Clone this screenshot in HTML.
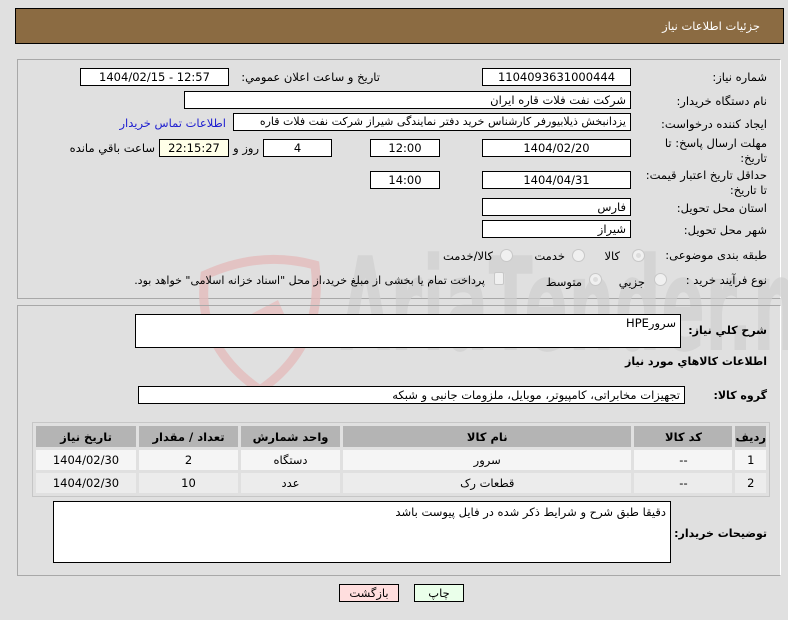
<!DOCTYPE html>
<html><head><meta charset="utf-8">
<style>
*{box-sizing:border-box;margin:0;padding:0}
body{width:788px;height:620px;background:#e0e0e0;font-family:"DejaVu Sans","Liberation Sans",sans-serif;font-size:11px;color:#000;position:relative;overflow:hidden}
.a{position:absolute}
.box{position:absolute;background:#fff;border:1px solid #000;height:18px;line-height:16px;padding:0 4px;font-size:11.5px;white-space:nowrap;overflow:hidden}
.c{text-align:center}
.r{text-align:right;direction:rtl}
.lbl{position:absolute;direction:rtl;text-align:right;white-space:nowrap;font-size:11.5px}
.rad{position:absolute;width:13px;height:13px;border-radius:50%;border:1px solid #c8c8c8;background:#f0f0f0}
table{border-collapse:separate;border-spacing:3px;position:absolute;left:32px;top:422px;width:738px;direction:rtl;background:#e0e0e0;border:1px solid #c6c6c6}
td,th{text-align:center;height:20px;font-size:11.5px}
th{background:#b4b4b4;font-weight:bold;height:21px}
tr.r1 td{background:#f5f5f5}
tr.r2 td{background:#ececec}
.btn{position:absolute;height:18px;border:1px solid #000;text-align:center;line-height:16px;font-size:11.5px}
</style></head><body>
<div class="a" style="left:15px;top:8px;width:769px;height:36px;background:#8b6b42;border:1px solid #000"></div>
<div class="lbl" style="right:28px;top:19px;color:#fff">جزئيات اطلاعات نياز</div>

<div class="a" style="left:17px;top:59px;width:764px;height:240px;border:1px solid #a8a8a8;border-right-color:#fff"></div>

<!-- watermark -->
<svg class="a" style="left:190px;top:245px" width="598" height="150" viewBox="0 0 598 150">
<path d="M15 30 Q70 5 125 20 Q135 100 70 145 Q5 100 15 30Z" fill="none" stroke="#e3bcbc" stroke-width="9" opacity="0.8"/>
<path d="M50 75 L88 55 L98 78 L70 92Z" fill="#e6c6c6"/>
<text x="0" y="0" font-family="DejaVu Sans" font-weight="bold" font-size="130" fill="#cfcfcf" opacity="0.7" transform="translate(150,105) scale(0.5,1)">AriaTender.net</text>
</svg>

<div class="lbl" style="right:21px;top:70px">شماره نياز:</div>
<div class="box c" style="left:482px;top:68px;width:149px">1104093631000444</div>
<div class="lbl" style="right:408px;top:70px">تاريخ و ساعت اعلان عمومي:</div>
<div class="box c" style="left:80px;top:68px;width:149px">1404/02/15 - 12:57</div>

<div class="lbl" style="right:21px;top:94px">نام دستگاه خريدار:</div>
<div class="box r" style="left:184px;top:91px;width:447px">شرکت نفت فلات قاره ايران</div>

<div class="lbl" style="right:21px;top:117px">ايجاد کننده درخواست:</div>
<div class="box r" style="left:233px;top:113px;width:398px;font-size:11px">يزدانبخش ذيلابيورفر کارشناس خريد دفتر نمايندگی شيراز شرکت نفت فلات قاره</div>
<div class="lbl" style="right:562px;top:116px;color:#2020d0">اطلاعات تماس خريدار</div>

<div class="lbl" style="right:21px;top:136px;line-height:15px">مهلت ارسال پاسخ: تا<br>تاريخ:</div>
<div class="box c" style="left:482px;top:139px;width:149px">1404/02/20</div>
<div class="lbl" style="right:352px;top:141px">ساعت</div>
<div class="box c" style="left:370px;top:139px;width:70px">12:00</div>
<div class="box c" style="left:263px;top:139px;width:69px">4</div>
<div class="lbl" style="right:529px;top:141px">روز و</div>
<div class="box c" style="left:159px;top:139px;width:70px;background:#ffffe8">22:15:27</div>
<div class="lbl" style="right:633px;top:141px">ساعت باقي مانده</div>

<div class="lbl" style="right:21px;top:168px;line-height:15px">حداقل تاريخ اعتبار قيمت:<br>تا تاريخ:</div>
<div class="box c" style="left:482px;top:171px;width:149px">1404/04/31</div>
<div class="lbl" style="right:352px;top:173px">ساعت</div>
<div class="box c" style="left:370px;top:171px;width:70px">14:00</div>

<div class="lbl" style="right:21px;top:201px">استان محل تحويل:</div>
<div class="box r" style="left:482px;top:198px;width:149px">فارس</div>
<div class="lbl" style="right:21px;top:223px">شهر محل تحويل:</div>
<div class="box r" style="left:482px;top:220px;width:149px">شيراز</div>

<div class="lbl" style="right:21px;top:248px">طبقه بندی موضوعی:</div>
<div class="rad" style="left:632px;top:249px;background:#ddd;box-shadow:inset 0 0 0 3px #f0f0f0"></div>
<div class="lbl" style="right:168px;top:249px">کالا</div>
<div class="rad" style="left:572px;top:249px"></div>
<div class="lbl" style="right:223px;top:249px">خدمت</div>
<div class="rad" style="left:500px;top:249px"></div>
<div class="lbl" style="right:295px;top:249px">کالا/خدمت</div>

<div class="lbl" style="right:21px;top:273px">نوع فرآيند خريد :</div>
<div class="rad" style="left:654px;top:273px"></div>
<div class="lbl" style="right:143px;top:275px">جزيي</div>
<div class="rad" style="left:589px;top:273px;background:#ddd;box-shadow:inset 0 0 0 3px #f0f0f0"></div>
<div class="lbl" style="right:206px;top:275px">متوسط</div>
<div class="a" style="left:494px;top:272px;width:10px;height:13px;border:1px solid #c8c8c8;background:#f0f0f0;border-radius:2px"></div>
<div class="lbl" style="right:303px;top:274px;font-size:11px">پرداخت تمام يا بخشی از مبلغ خريد،از محل "اسناد خزانه اسلامی" خواهد بود.</div>

<div class="a" style="left:17px;top:305px;width:764px;height:271px;border:1px solid #a8a8a8;border-right-color:#fff"></div>

<div class="lbl" style="right:21px;top:324px;font-weight:bold;font-size:11px">شرح کلي نياز:</div>
<div class="box r" style="left:135px;top:314px;width:546px;height:34px">سرورHPE</div>
<div class="lbl" style="right:21px;top:355px;font-weight:bold;font-size:11px">اطلاعات کالاهاي مورد نياز</div>

<div class="lbl" style="right:21px;top:389px;font-weight:bold;font-size:11px">گروه کالا:</div>
<div class="box r" style="left:138px;top:386px;width:547px">تجهيزات مخابراتی، کامپيوتر، موبايل، ملزومات جانبی و شبکه</div>

<table>
<tr><th style="width:30px">رديف</th><th style="width:98px">کد کالا</th><th>نام کالا</th><th style="width:99px">واحد شمارش</th><th style="width:99px">تعداد / مقدار</th><th style="width:100px">تاريخ نياز</th></tr>
<tr class="r1"><td>1</td><td>--</td><td>سرور</td><td>دستگاه</td><td>2</td><td>1404/02/30</td></tr>
<tr class="r2"><td>2</td><td>--</td><td>قطعات رک</td><td>عدد</td><td>10</td><td>1404/02/30</td></tr>
</table>

<div class="lbl" style="right:21px;top:527px;font-weight:bold;font-size:11px">توضيحات خريدار:</div>
<div class="box r" style="left:53px;top:501px;width:618px;height:62px;white-space:normal;padding-top:2px">دقيقا طبق شرح و شرايط ذکر شده در فايل پيوست باشد</div>

<div class="btn" style="left:339px;top:584px;width:60px;background:#ffdede">بازگشت</div>
<div class="btn" style="left:414px;top:584px;width:50px;background:#eaffea">چاپ</div>
</body></html>
